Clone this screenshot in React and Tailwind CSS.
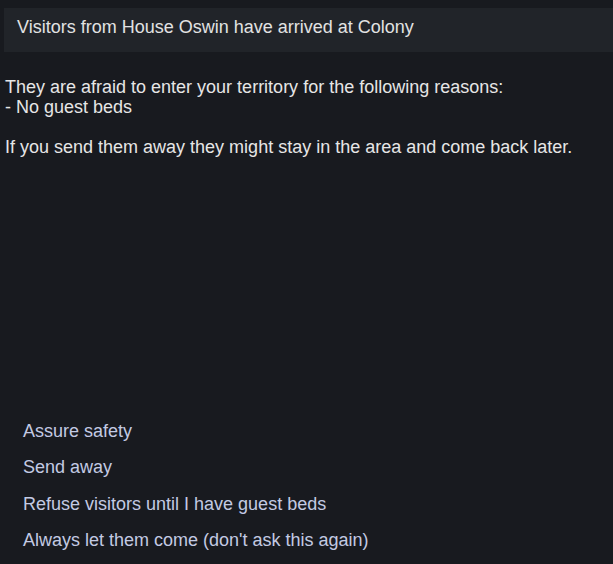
export default function App() {
  const options = [
    "Assure safety",
    "Send away",
    "Refuse visitors until I have guest beds",
    "Always let them come (don't ask this again)",
  ];

  return (
    <div className="h-[564px] w-[613px] overflow-hidden bg-[#181a1f] pt-2 font-['Liberation_Sans',Arial,sans-serif] text-[18px] leading-5 text-[#e6e6e6]">
      <div className="ml-1 h-11 bg-[#212429] pl-[13px] pt-[9px] text-[#e2e2e2]">
        Visitors from House Oswin have arrived at Colony
      </div>
      <div className="mt-[25px] px-[5px]">
        <p>They are afraid to enter your territory for the following reasons:</p>
        <p>- No guest beds</p>
        <p className="mt-5">If you send them away they might stay in the area and come back later.</p>
      </div>
      <ul className="mt-[264px] flex flex-col gap-[16.4px] pl-[23px] text-[#c3cae3]">
        {options.map((o) => (
          <li key={o}>{o}</li>
        ))}
      </ul>
    </div>
  );
}
